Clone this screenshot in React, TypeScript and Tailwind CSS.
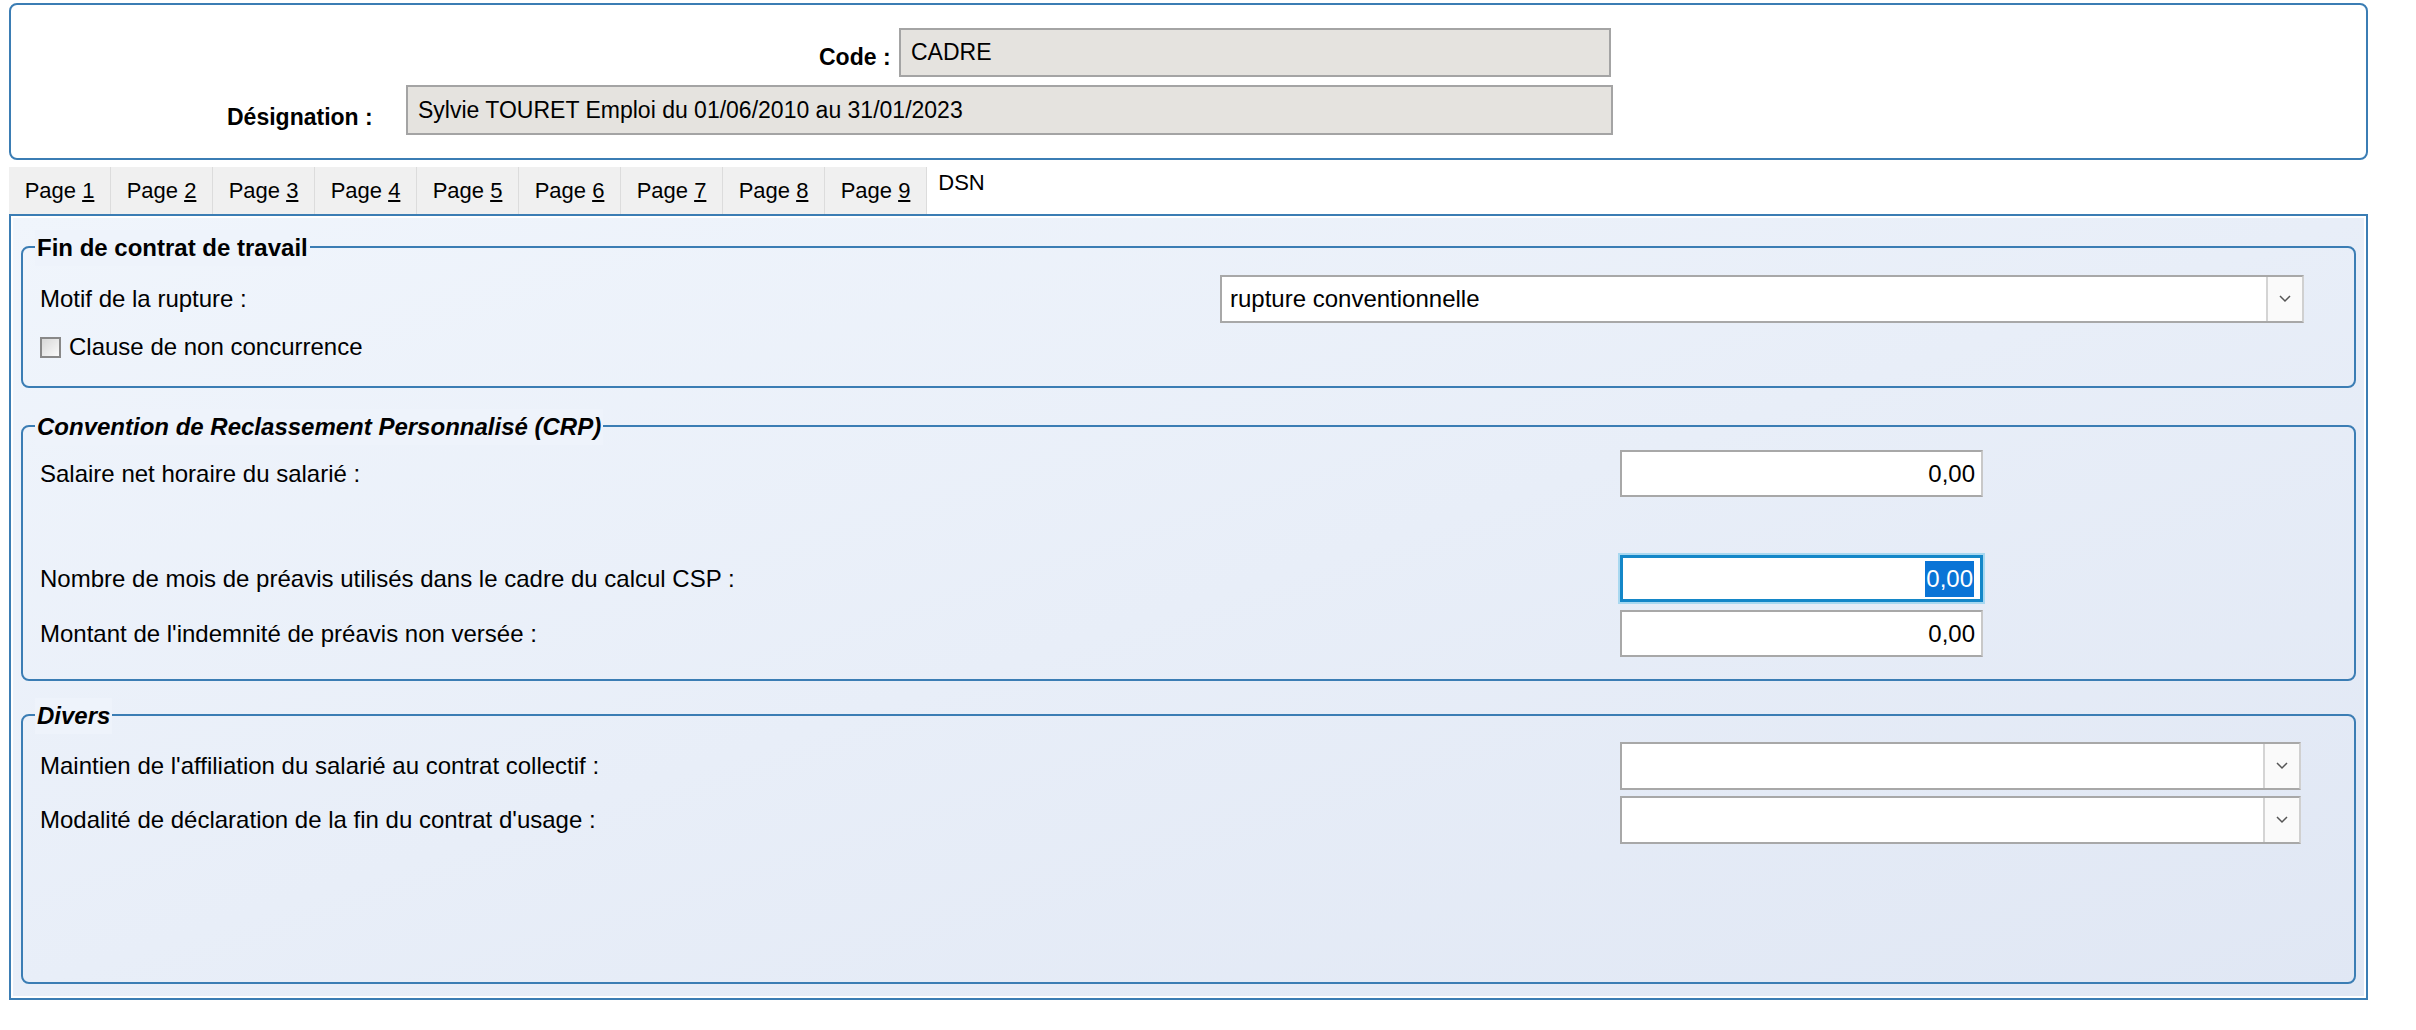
import React from "react";

const Chevron = () => (
  <svg width="14" height="10" viewBox="0 0 14 10"><path d="M2 2 L7 7 L12 2" fill="none" stroke="#555" strokeWidth="1.5" /></svg>
);

function Select({ value, w }: { value?: string; w: string }) {
  return (
    <div className={`flex h-[48px] ${w} border-2 border-[#a8a8a8] border-r-[#d0d0d0] bg-white`}>
      <div className="flex-1 flex items-center pl-[8px] text-[24px] text-black">{value}</div>
      <div className="w-[36px] border-l-2 border-[#d4d4d4] bg-[#fafafa] flex items-center justify-center"><Chevron /></div>
    </div>
  );
}

function Num({ sel }: { sel?: boolean }) {
  return (
    <div className={`h-[47px] w-[363px] bg-white flex items-center justify-end pr-[6px] text-[24px] ${sel ? "border-[3px] border-[#1487c8] ring-2 ring-[#a8d8f0]" : "border-2 border-[#a8a8a8] border-r-[#c8c8c8]"}`}>
      <span className={sel ? "bg-[#0a74d6] text-white px-[1px]" : "text-black"}>0,00</span>
    </div>
  );
}

function Group({ title, italic, h, children }: { title: string; italic?: boolean; h: string; children: React.ReactNode }) {
  return (
    <div className={`relative mx-[8px] ${h} border-2 border-[#3b7db4] rounded-[8px]`}>
      <span className={`absolute left-[12px] -top-[18px] px-[2px] bg-[#eef3fb] text-[24px] font-bold ${italic ? "italic" : ""} text-black`}>{title}</span>
      {children}
    </div>
  );
}

export default function App() {
  const tabs = ["1", "2", "3", "4", "5", "6", "7", "8", "9"];
  return (
    <div className="w-[2416px] h-[1030px] bg-white" style={{ fontFamily: '"Liberation Sans", Arial, sans-serif' }}>
      <div className="pt-[3px] pl-[9px] w-[2368px]">
        <div className="h-[157px] border-2 border-[#3b7db4] rounded-[8px] relative">
          <div className="absolute left-[808px] top-[35px] text-[23px] font-bold">Code :</div>
          <div className="absolute left-[888px] top-[23px] w-[712px] h-[49px] bg-[#e5e3df] border-2 border-[#a4a4a4] flex items-center pl-[10px] text-[23px]">CADRE</div>
          <div className="absolute left-[216px] top-[95px] text-[23px] font-bold">Désignation :</div>
          <div className="absolute left-[395px] top-[80px] w-[1207px] h-[50px] bg-[#e5e3df] border-2 border-[#a4a4a4] flex items-center pl-[10px] text-[23px]">Sylvie TOURET Emploi du 01/06/2010 au 31/01/2023</div>
        </div>
        <div className="flex items-end h-[54px] mt-[0px]">
          {tabs.map((t) => (
            <div key={t} className="w-[102px] h-[47px] bg-[#f0f0f0] border-r border-[#dcdcdc] flex items-center justify-center text-[22px]">
              <span>Page <span className="underline underline-offset-2">{t}</span></span>
            </div>
          ))}
          <div className="w-[69px] h-[54px] bg-white flex items-start justify-center pt-[6px] text-[22px]">DSN</div>
        </div>
        <div className="h-[786px] border-2 border-[#3b7db4] p-[2px] bg-white">
          <div className="h-full bg-gradient-to-br from-[#f0f5fc] to-[#e0e7f4] pt-[28px]">
            <Group title="Fin de contrat de travail" h="h-[142px]">
              <div className="flex items-center h-[48px] mt-[27px]">
                <span className="ml-[17px] text-[24px] w-[1180px]">Motif de la rupture :</span>
                <Select value="rupture conventionnelle" w="w-[1084px]" />
              </div>
              <div className="flex items-center mt-[6px] ml-[17px]">
                <div className="w-[21px] h-[21px] border-2 border-[#888] bg-gradient-to-br from-[#d8d8d8] to-[#fafafa] mr-[8px]" />
                <span className="text-[24px]">Clause de non concurrence</span>
              </div>
            </Group>
            <div className="h-[37px]" />
            <Group title="Convention de Reclassement Personnalisé (CRP)" italic h="h-[256px]">
              <div className="flex items-center mt-[23px]">
                <span className="ml-[17px] text-[24px] w-[1580px]">Salaire net horaire du salarié :</span>
                <Num />
              </div>
              <div className="flex items-center mt-[58px]">
                <span className="ml-[17px] text-[24px] w-[1580px]">Nombre de mois de préavis utilisés dans le cadre du calcul CSP :</span>
                <Num sel />
              </div>
              <div className="flex items-center mt-[8px]">
                <span className="ml-[17px] text-[24px] w-[1580px]">Montant de l'indemnité de préavis non versée :</span>
                <Num />
              </div>
            </Group>
            <div className="h-[33px]" />
            <Group title="Divers" italic h="h-[270px]">
              <div className="flex items-center mt-[26px]">
                <span className="ml-[17px] text-[24px] w-[1580px]">Maintien de l'affiliation du salarié au contrat collectif :</span>
                <Select w="w-[681px]" />
              </div>
              <div className="flex items-center mt-[6px]">
                <span className="ml-[17px] text-[24px] w-[1580px]">Modalité de déclaration de la fin du contrat d'usage :</span>
                <Select w="w-[681px]" />
              </div>
            </Group>
          </div>
        </div>
      </div>
    </div>
  );
}
